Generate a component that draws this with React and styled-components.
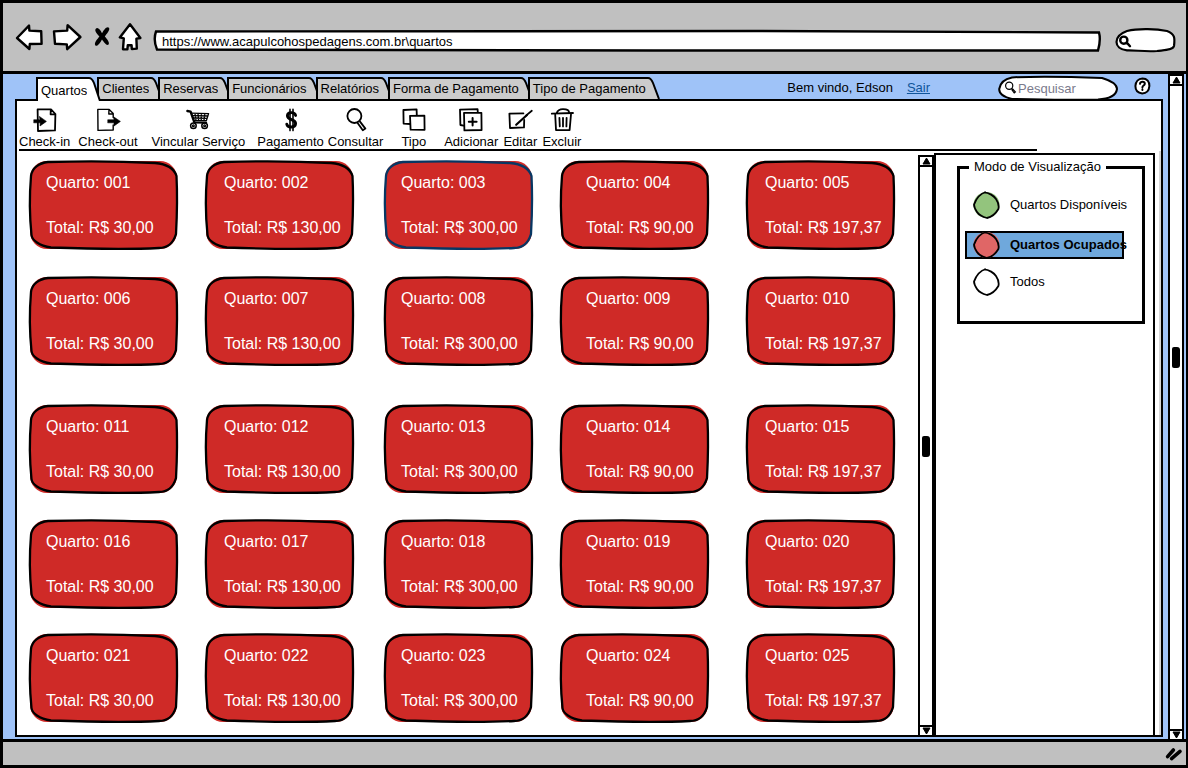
import React, { useState } from "react";
import styled, { createGlobalStyle } from "styled-components";

const GlobalStyle = createGlobalStyle`
  * { box-sizing: border-box; }
  body {
    margin: 0;
    background: #fff;
    color: #000;
    font: 13px/16px "Liberation Sans", Arial, sans-serif;
  }
  button, input { font: inherit; color: inherit; }
`;

const Window = styled.div`
  display: flex;
  flex-direction: column;
  min-height: 100vh;
  border: 3px solid #000;
  border-right-width: 2px;
  background: #c0c0c0;
`;

const BrowserBar = styled.header`
  display: flex;
  align-items: center;
  height: 71px;
  padding: 0 10px 0 12px;
  border-bottom: 3px solid #000;
`;

const PlainButton = styled.button`
  padding: 0;
  border: 0;
  background: none;
  cursor: pointer;
`;

const NavButton = styled(PlainButton)`
  display: block;
  width: ${(p) => p.$width}px;
  height: 30px;
  margin-left: ${(p) => p.$before || 0}px;
  svg { display: block; }
`;

const AddressField = styled.label`
  position: relative;
  flex: 1;
  height: 22px;
  margin: 8px 14px 0 12px;
`;

const BarSearch = styled.label`
  position: relative;
  width: 61px;
  height: 24px;
  margin-top: 6px;
`;

const Outline = styled.svg`
  position: absolute;
  inset: 0;
  width: 100%;
  height: 100%;
  overflow: visible;
`;

const FieldInput = styled.input`
  position: relative;
  display: block;
  width: 100%;
  height: 100%;
  padding: 0 12px 0 ${(p) => p.$indent}px;
  border: 0;
  outline: 0;
  background: none;
  &::placeholder { color: #7a7a8c; opacity: 1; }
`;

const FieldIcon = styled.svg`
  position: absolute;
  left: ${(p) => p.$left}px;
  top: 5px;
`;

const Page = styled.div`
  display: flex;
  flex: 1;
  background: #9fc3f8;
`;

const Main = styled.div`
  display: flex;
  flex: 1;
  flex-direction: column;
  min-width: 0;
  padding: 3px 5px 2px 12px;
`;

const TopRow = styled.div`
  display: flex;
  align-items: center;
  height: 22px;
  padding: 0 12px 0 21px;
`;

const Tabs = styled.nav`
  display: flex;
  align-self: stretch;
`;

const TabButton = styled(PlainButton)`
  position: relative;
  z-index: ${(p) => (p.$active ? 1 : 0)};
  display: flex;
  height: ${(p) => (p.$active ? 24 : 22)}px;
  margin-right: ${(p) => (p.$active ? -4 : -5)}px;
  white-space: nowrap;
`;

const TabText = styled.span`
  height: 100%;
  padding: ${(p) => (p.$active ? 4 : 2)}px 0 0 3px;
  border: solid #000;
  border-width: 2px 0 0 2px;
  background: ${(p) => (p.$active ? "#fff" : "#ccc")};
`;

const Account = styled.div`
  display: flex;
  align-items: center;
  gap: 14px;
  margin: 0 68px 0 auto;
`;

const SignOut = styled.a`
  color: #10559a;
`;

const SearchField = styled.label`
  position: relative;
  z-index: 1;
  width: 120px;
  height: 24px;
  margin-right: 16px;
`;

const Content = styled.main`
  display: flex;
  flex: 1;
  flex-direction: column;
  border: 2px solid #000;
  background: #fff;
`;

const Toolbar = styled.div`
  display: flex;
  align-items: flex-end;
  height: 50px;
  margin: 0 124px 0 2px;
  border-bottom: 2px solid #000;
`;

const Tool = styled(PlainButton)`
  display: flex;
  flex-direction: column;
  align-items: center;
  margin-left: ${(p) => p.$before}px;
  gap: 2px;
  white-space: nowrap;
  line-height: 15px;
`;

const ToolIcon = styled.svg`
  display: block;
  width: 24px;
  height: 24px;
  overflow: visible;
  fill: none;
  stroke: #000;
  stroke-width: 1.8;
  stroke-linecap: round;
  stroke-linejoin: round;
`;

const Workspace = styled.div`
  display: flex;
  flex: 1;
`;

const RoomGrid = styled.section`
  display: grid;
  flex: 1;
  grid-template-columns:
    minmax(148px, 176fr) minmax(148px, 179fr) minmax(148px, 176fr)
    minmax(148px, 186fr) minmax(148px, 172fr);
  grid-template-rows: 116px 128px 115px 114px 90px;
  padding: 9px 0 12px 12px;
`;

const RoomCard = styled(PlainButton)`
  position: relative;
  display: flex;
  flex-direction: column;
  gap: 25px;
  width: 149px;
  height: 90px;
  padding: 13px 0 0 ${(p) => p.$indent}px;
  color: #fff;
  font-size: 16px;
  line-height: 20px;
  text-align: left;
  white-space: nowrap;
`;

const CardText = styled.span`
  position: relative;
`;

const Scrollbar = styled.div`
  display: flex;
  flex-direction: column;
  align-items: center;
  width: 16px;
  margin: ${(p) => p.$top}px ${(p) => p.$right}px 0 0;
  border: solid #000;
  border-width: 2px 2px 0;
  background: #fff;
`;

const ScrollButton = styled(PlainButton)`
  width: 100%;
  height: 10px;
  border: solid #000;
  border-width: ${(p) => (p.$down ? "2px 0 0" : "0 0 2px")};
  svg { display: block; margin: 0 auto; }
`;

const ScrollTrack = styled.div`
  display: flex;
  flex: 1;
  flex-direction: column;
  align-items: center;
`;

const Spacer = styled.div`
  flex: ${(p) => p.$share};
`;

const Thumb = styled.div`
  width: 8px;
  height: 21px;
  border-radius: 2px 3px 3px 2px;
  background: #000;
`;

const SidePanel = styled.aside`
  width: 221px;
  margin: 2px 4px 0 0;
  padding: 4px 8px 0 21px;
  border: solid #000;
  border-width: 2px 2px 0;
`;

const PanelEdge = styled.div`
  width: 2px;
  background: #d6d6d6;
`;

const ModeGroup = styled.fieldset`
  height: 165px;
  margin: 0;
  padding: 16px 0 0 5px;
  border: 3px solid #000;
`;

const ModeTitle = styled.legend`
  margin-left: 4px;
  padding: 0 5px;
`;

const ModeOption = styled.label`
  position: relative;
  display: flex;
  align-items: center;
  gap: 10px;
  width: 159px;
  height: 28px;
  margin-bottom: ${(p) => (p.$selected ? 9 : 12)}px;
  padding-left: 8px;
  background: ${(p) => (p.$selected ? "#6fa8dc" : "none")};
  box-shadow: ${(p) => (p.$selected ? "inset 0 0 0 2px #000" : "none")};
  font-weight: ${(p) => (p.$selected ? "bold" : "normal")};
  white-space: nowrap;
  cursor: pointer;
`;

const ModeDot = styled.svg`
  flex: none;
  width: 27px;
  height: 28px;
`;

const ModeRadio = styled.input`
  position: absolute;
  inset: 0;
  margin: 0;
  opacity: 0;
  cursor: pointer;
`;

const StatusBar = styled.footer`
  display: flex;
  align-items: center;
  justify-content: flex-end;
  height: 26px;
  padding-right: 3px;
  border-top: 3px solid #000;
`;

const BackIcon = () => (
  <svg width="28" height="30" viewBox="0 0 28 30">
    <path d="M2 16 L14 3.6 L14.4 8.6 L26.2 9.2 L26.6 21.8 L14.8 22 L14.4 27 Z" fill="#fff" stroke="#000" strokeWidth="2.4" strokeLinejoin="round" />
  </svg>
);

const ForwardIcon = () => (
  <svg width="30" height="30" viewBox="0 0 30 30">
    <path d="M28.4 15 L15.6 3.2 L15.2 8.6 L2 9.4 L3 21.8 L14.8 22.4 L15.2 27.2 Z" fill="#fff" stroke="#000" strokeWidth="2.4" strokeLinejoin="round" />
  </svg>
);

const StopIcon = () => (
  <svg width="18" height="30" viewBox="0 0 18 30">
    <path d="M2.6 7 C4.6 4.6 7 7.4 9 11.2 C11 7.4 14 3.6 16 5.8 C17.4 8 13.6 12 11.8 14.4 C14.4 17.4 17 20.4 15.6 22.6 C13.4 24 11 20 9 17.4 C7.2 20.6 4.4 25 2.4 23.4 C.6 21 4.4 17 6.4 14.4 C4 12 1.4 9 2.6 7 Z" fill="#000" />
  </svg>
);

const HomeIcon = () => (
  <svg width="24" height="30" viewBox="0 0 24 30">
    <path d="M12 2.2 L1.8 15.4 L5.8 16.4 L5 27.2 L9.4 27.4 L9.8 23.2 L13.6 23.2 L13.8 27 L18.8 26.6 L18.4 16.6 L22.4 16 Z" fill="#fff" stroke="#000" strokeWidth="2.4" strokeLinejoin="round" />
  </svg>
);

const icons = {
  checkin: (
    <>
      <path d="M4.6 1.4 L18 1.4 L22.4 6 L22 22.4 L5 23 Z M17.8 1.6 L17.6 6.4 L22.2 6.2" />
      <path d="M1 11.8 L7 11.8 L6.4 8.4 L13.4 13.4 L7 18 L7.2 14.8 L1 14.8 Z" fill="#000" strokeWidth="0.6" />
    </>
  ),
  checkout: (
    <>
      <path d="M17.2 9.6 L17.2 5.4 L13.2 1.4 L1.8 1.4 L2 22.4 L17.2 22 L17.2 17 M13 1.6 L12.8 6 L17 6" strokeWidth="1.4" />
      <path d="M12 11.8 L18 11.8 L17.6 8.8 L24.4 13.4 L18 18 L18 14.8 L12 14.8 Z" fill="#000" strokeWidth="0.6" />
    </>
  ),
  cart: (
    <>
      <path d="M1.4 3 L4.6 3.6 L8.4 14.4 L20 14.6" strokeWidth="2.4" />
      <path d="M5.2 5.2 L22.6 5.6 L20.4 12.6 L8 12.6 M6.2 7.6 L22 8 M7 10 L21 10.4 M9 5.6 L10 12.4 M12 5.6 L12.6 12.4 M15.4 5.6 L15.2 12.4 M18.8 5.6 L18 12.4" strokeWidth="1.3" />
      <circle cx="7.4" cy="17.8" r="2.8" strokeWidth="1.5" />
      <circle cx="18.6" cy="17.8" r="2.8" strokeWidth="1.5" />
      <circle cx="7.4" cy="17.8" r="0.6" />
      <circle cx="18.6" cy="17.8" r="0.6" />
    </>
  ),
  dollar: (
    <>
      <path d="M16.6 7.4 C15.4 3.6 8.6 3.8 8.4 7.8 C8.4 12.4 16.8 10.8 16.6 15.6 C16.2 20.2 8.6 20 7.8 16.2" strokeWidth="2.9" />
      <path d="M11 1.4 L11 22.6 M14 1.4 L14 22.6" strokeWidth="1.6" />
    </>
  ),
  search: (
    <>
      <circle cx="10.4" cy="8" r="7" />
      <path d="M13.6 15 L18.8 22.2 L21.4 20.6 L16 13.6" />
    </>
  ),
  type: (
    <>
      <path d="M8 16 L1.6 15.6 L1.4 2 L14.6 1.4 L14.8 7.2" />
      <path d="M8 7.8 L22.4 7.6 L22.6 21.8 L8.6 21.6 Z" />
    </>
  ),
  add: (
    <>
      <path d="M4.6 17.6 L1.4 17 L1 1.6 L18.6 1.2 L18.8 4.2" />
      <path d="M5 4.8 L22.4 4.8 L22.6 22 L5.4 22.4 Z" />
      <path d="M13.6 10 L13.6 17.6 M9.8 13.8 L17.6 13.8" strokeWidth="2" />
    </>
  ),
  edit: (
    <>
      <path d="M16.2 12 L16 19.4 L2 20 L1.4 5.6 L15.4 5.4" />
      <path d="M8.2 16.8 L19 7" strokeWidth="2.2" />
      <path d="M18 7.6 L23.8 2.8" />
    </>
  ),
  trash: (
    <>
      <path d="M1.8 5.6 L23 5 M7 5 C6.8 0 19 0 19.2 4.8" />
      <path d="M5.2 6.6 L6 22 L19.6 22.2 L21 6.4 M9.4 9.8 L9.8 18.4 M13 9.8 L13 18.4 M16.6 9.8 L16.4 18.4" />
    </>
  ),
};

const tools = [
  { id: "checkin", label: "Check-in", before: 0 },
  { id: "checkout", label: "Check-out", before: 8 },
  { id: "cart", label: "Vincular Serviço", before: 14 },
  { id: "dollar", label: "Pagamento", before: 12 },
  { id: "search", label: "Consultar", before: 4 },
  { id: "type", label: "Tipo", before: 18 },
  { id: "add", label: "Adicionar", before: 18 },
  { id: "edit", label: "Editar", before: 5 },
  { id: "trash", label: "Excluir", before: 5 },
];

const tabs = [
  "Quartos",
  "Clientes",
  "Reservas",
  "Funcionários",
  "Relatórios",
  "Forma de Pagamento",
  "Tipo de Pagamento",
];

const totals = ["30,00", "130,00", "300,00", "90,00", "197,37"];
const indents = [17, 19, 17, 26, 19];

const rooms = Array.from({ length: 25 }, (_, i) => ({
  number: String(i + 1).padStart(3, "0"),
  total: totals[i % 5],
  indent: indents[i % 5],
}));

const modes = [
  { id: "free", label: "Quartos Disponíveis", color: "#93c47d" },
  { id: "busy", label: "Quartos Ocupados", color: "#e06666" },
  { id: "all", label: "Todos", color: "#fff" },
];

function Tab({ label, active, onClick }) {
  const h = active ? 24 : 22;
  return (
    <TabButton type="button" $active={active} onClick={onClick}>
      <TabText $active={active}>{label}</TabText>
      <svg width="14" height={h} viewBox={`0 0 14 ${h}`}>
        <path d={`M0 0 L3 0 Q6 1 7 5 L13 ${h} L0 ${h} Z`} fill={active ? "#fff" : "#ccc"} />
        <path d={`M0 1 L2 1 Q5 1 7 6 L13 ${h}`} fill="none" stroke="#000" strokeWidth="2" />
      </svg>
    </TabButton>
  );
}

function Room({ room, selected, onClick }) {
  return (
    <RoomCard type="button" $indent={room.indent} onClick={onClick}>
      <Outline viewBox="0 0 149 90" preserveAspectRatio="none" aria-hidden="true">
        <rect x="1" y="1" width="147" height="88" rx="17" fill="#cf2a27" />
        <path
          d="M2 16 C3 8 10 3 19 2 C50 1 90 1 126 3 C138 4 145 8 147.5 16 C148.5 36 148 56 147 74 C144 84 138 88 130 88 C100 89.5 50 88.5 22 87.5 C10 86 3 80 2.5 75 C0.5 56 0.5 34 2 16 Z"
          fill="none"
          stroke={selected ? "#073763" : "#000"}
          strokeWidth="2.3"
        />
      </Outline>
      <CardText>Quarto: {room.number}</CardText>
      <CardText>Total: R$ {room.total}</CardText>
    </RoomCard>
  );
}

function VerticalScroll({ top, right, before, after }) {
  return (
    <Scrollbar $top={top} $right={right}>
      <ScrollButton type="button" aria-label="Rolar para cima">
        <svg width="9" height="8" viewBox="0 0 9 8"><path d="M1 7 L4.5 1 L8 7 Z" stroke="#000" /></svg>
      </ScrollButton>
      <ScrollTrack>
        <Spacer $share={before} />
        <Thumb />
        <Spacer $share={after} />
      </ScrollTrack>
      <ScrollButton type="button" $down aria-label="Rolar para baixo">
        <svg width="9" height="8" viewBox="0 0 9 8"><path d="M1 1 L8 1 L4.5 7 Z" stroke="#000" /></svg>
      </ScrollButton>
    </Scrollbar>
  );
}

export default function App() {
  const [tab, setTab] = useState("Quartos");
  const [room, setRoom] = useState("003");
  const [mode, setMode] = useState("busy");
  return (
    <>
      <GlobalStyle />
      <Window>
        <BrowserBar>
          <NavButton type="button" $width={28} aria-label="Voltar"><BackIcon /></NavButton>
          <NavButton type="button" $width={30} $before={9} aria-label="Avançar"><ForwardIcon /></NavButton>
          <NavButton type="button" $width={18} $before={11} aria-label="Parar"><StopIcon /></NavButton>
          <NavButton type="button" $width={24} $before={7} aria-label="Início"><HomeIcon /></NavButton>
          <AddressField>
            <Outline viewBox="0 0 948 22" preserveAspectRatio="none" aria-hidden="true">
              <path d="M2 1.5 L600 1 L946 2.5 Q948 10 945 20.5 L500 20.5 L3 19.5 Q-1 10 2 1.5 Z" fill="#fff" stroke="#000" strokeWidth="2.4" vectorEffect="non-scaling-stroke" />
            </Outline>
            <FieldInput $indent={8} aria-label="Endereço" defaultValue="https://www.acapulcohospedagens.com.br\quartos" />
          </AddressField>
          <BarSearch>
            <Outline viewBox="0 0 61 24" aria-hidden="true">
              <path d="M12 3 C24 0 42 1 52 3 C60 6 60 10 59 18 C58 22 50 22 42 23 C30 24 20 22 12 22.4 C-2 21 -2 8 12 3 Z" fill="#fff" stroke="#000" strokeWidth="2.2" />
            </Outline>
            <FieldIcon width="16" height="16" viewBox="0 0 16 16" $left={3}>
              <path d="M8.8 9.6 L12 13.2 M9.4 7.2 A3.6 3.6 0 1 1 2.2 7.2 A3.6 3.6 0 1 1 9.4 7.2" fill="none" stroke="#000" strokeWidth="2.4" strokeLinecap="round" />
            </FieldIcon>
            <FieldInput $indent={18} aria-label="Busca do navegador" />
          </BarSearch>
        </BrowserBar>

        <Page>
          <Main>
            <TopRow>
              <Tabs>
                {tabs.map((t) => (
                  <Tab key={t} label={t} active={t === tab} onClick={() => setTab(t)} />
                ))}
              </Tabs>
              <Account>
                <span>Bem vindo, Edson</span>
                <SignOut href="#sair">Sair</SignOut>
              </Account>
              <SearchField>
                <Outline viewBox="0 0 120 24" aria-hidden="true">
                  <path d="M14 1.4 C40 0 80 1 104 2 C114 5 119 8 119 13 C118 20 110 23 100 23.6 C70 24.4 40 23.4 14 23 C5 21 1 18 1.2 13 C2 7 6 3 14 1.4 Z" fill="#fff" stroke="#000" strokeWidth="2" />
                </Outline>
                <FieldIcon width="14" height="14" viewBox="0 0 14 14" $left={6}>
                  <path d="M8.8 4.8 A3.6 3.6 0 1 1 1.6 4.8 A3.6 3.6 0 1 1 8.8 4.8 M7.6 8.4 L10.2 12 L11.4 11 L8.4 7.6" fill="none" stroke="#000" strokeWidth="1.2" />
                </FieldIcon>
                <FieldInput $indent={20} type="text" placeholder="Pesquisar" aria-label="Pesquisar" />
              </SearchField>
              <PlainButton type="button" aria-label="Ajuda">
                <svg width="17" height="18" viewBox="0 0 17 18">
                  <path d="M8.5 1.4 C13 1.4 15.6 4.6 15.4 9 C15 13.4 12.4 16.4 8.2 16.4 C4 16 1.4 13.4 1.4 9 C1.6 4.6 4.4 1.6 8.5 1.4 Z" fill="#fff" stroke="#000" strokeWidth="2" />
                  <path d="M6 6.8 C6.4 4.2 10.8 4.2 10.8 6.8 C10.6 8.6 8.4 8.4 8.4 10.4 M8.4 12.6 L8.4 13" fill="none" stroke="#000" strokeWidth="2" strokeLinecap="round" />
                </svg>
              </PlainButton>
            </TopRow>

            <Content>
              <Toolbar>
                {tools.map((t) => (
                  <Tool key={t.id} type="button" $before={t.before}>
                    <ToolIcon viewBox="0 0 24 24" aria-hidden="true">{icons[t.id]}</ToolIcon>
                    {t.label}
                  </Tool>
                ))}
              </Toolbar>
              <Workspace>
                <RoomGrid>
                  {rooms.map((r) => (
                    <Room key={r.number} room={r} selected={r.number === room} onClick={() => setRoom(r.number)} />
                  ))}
                </RoomGrid>
                <VerticalScroll top={4} right={0} before={1} after={1} />
                <SidePanel>
                  <ModeGroup>
                    <ModeTitle>Modo de Visualização</ModeTitle>
                    {modes.map((m) => (
                      <ModeOption key={m.id} $selected={m.id === mode}>
                        <ModeRadio type="radio" name="mode" checked={m.id === mode} onChange={() => setMode(m.id)} />
                        <ModeDot viewBox="0 0 27 28" aria-hidden="true">
                          <circle cx="13.5" cy="14" r="13" fill={m.color} />
                          <path d="M11 1.4 C16 1.6 21 5 23 8 C25 11 26.4 14 25.4 18 C23 22 19 26 14 27 C10 26 6 24 4 21 C2 18 1 15 1 13.6 C3 8 6 3 13 1" fill="none" stroke="#000" strokeWidth="1.8" />
                        </ModeDot>
                        {m.label}
                      </ModeOption>
                    ))}
                  </ModeGroup>
                </SidePanel>
                <PanelEdge />
              </Workspace>
            </Content>
          </Main>
          <VerticalScroll top={0} right={2} before={258} after={358} />
        </Page>

        <StatusBar>
          <svg width="18" height="16" viewBox="0 0 18 16">
            <path d="M2.6 10.6 L8.4 4 M6.6 12.6 L15 5.4" stroke="#000" strokeWidth="3.6" strokeLinecap="round" />
          </svg>
        </StatusBar>
      </Window>
    </>
  );
}
